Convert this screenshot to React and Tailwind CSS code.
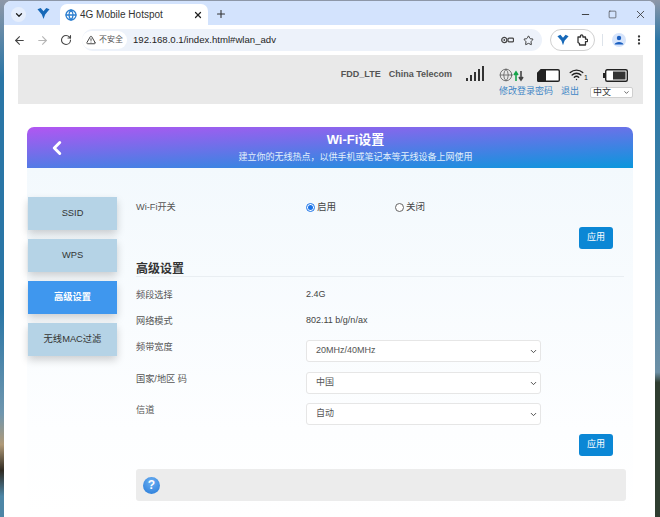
import { ArrowLeft, ArrowRight, RotateCw, TriangleAlert, Star, EllipsisVertical, Minus, Square, X, Plus, ChevronDown, ChevronLeft, Globe, Wifi } from "lucide-react";

const font = "font-['Liberation_Sans','Noto_Sans_CJK_SC',sans-serif]";

function VLogo({ size = 13 }) {
  return (
    <svg width={size} height={size} viewBox="0 0 14 14">
      <path d="M0.5 2.5 L4 1 L7 4.5 L10 1 L13.5 2.5 L8.8 8 L7 13 L5.2 8 Z" fill="#1668b8" />
    </svg>
  );
}

function Field({ label, children, rowClass, labelClass = "pt-px" }) {
  return (
    <div className={`flex ${rowClass}`}>
      <div className={`w-[170px] shrink-0 text-[9.2px] text-[#555] ${labelClass}`}>{label}</div>
      {children}
    </div>
  );
}

function Dropdown({ value }) {
  return (
    <div className="flex h-[22px] w-[235px] items-center justify-between rounded-[3px] border border-[#e6e6e6] bg-white pl-[9px] pr-[2px] text-[9px] text-[#555]">
      <span>{value}</span>
      <ChevronDown size={9} strokeWidth={2.5} className="text-[#444]" />
    </div>
  );
}

function ApplyButton() {
  return (
    <div className="flex h-[22px] w-[34px] items-center justify-center rounded-[3px] bg-[#0b87d5] text-[9px] text-white">
      应用
    </div>
  );
}

function SideButton({ children, active, className = "" }) {
  return (
    <div
      className={`flex h-[33px] w-[89px] items-center justify-center text-[9.3px] shadow-[0_4px_8px_rgba(0,0,0,0.18)] ${
        active ? "bg-[#3f97ee] font-bold text-white" : "bg-[#b5d3e6] text-[#333]"
      } ${className}`}
    >
      {children}
    </div>
  );
}

export default function App() {
  return (
    <div className={`flex h-[517px] w-[660px] overflow-hidden bg-[#8d97a8] ${font}`}>
      {/* Desktop wallpaper, left edge */}
      <div className="w-[4px] shrink-0 bg-[linear-gradient(180deg,#8d97a8_0%,#2a76a6_15%,#2a76a6_60%,#6f96ae_80%,#b09a78_86%,#2f2a22_91%,#4d86a6_96%,#4d86a6_100%)]" />

      <div className="mt-px flex h-[516px] w-[651px] shrink-0 flex-col overflow-hidden rounded-t-[7px] bg-white">

        {/* Tab strip */}
        <div className="flex h-[24px] shrink-0 items-end bg-[#d3e3fd]">
          <div className="mb-[3px] ml-[7px] flex h-[15px] w-[15px] items-center justify-center rounded-full bg-[#e6eefc]">
            <ChevronDown size={10} strokeWidth={3} className="text-[#1f1f1f]" />
          </div>
          <div className="mb-[5px] ml-[11px]"><VLogo /></div>
          <div className="ml-[10px] flex h-[21px] w-[148px] items-center rounded-t-[7px] bg-white pl-[5px] pr-[5px]">
            <Globe size={12} className="text-[#2c7fd0]" strokeWidth={2.6} />
            <span className="ml-[3px] text-[10px] text-[#333]">4G Mobile Hotspot</span>
            <X size={10} strokeWidth={3} className="ml-auto text-[#222]" />
          </div>
          <Plus size={12} strokeWidth={2.2} className="mb-[5px] ml-[7px] text-[#333]" />
          <div className="mb-[4px] ml-auto flex items-center gap-[17px] pr-[8px] text-[#333]">
            <Minus size={11} strokeWidth={2} />
            <Square size={9} strokeWidth={1.6} />
            <X size={13} strokeWidth={1.5} />
          </div>
        </div>

        {/* Toolbar */}
        <div className="flex h-[30px] shrink-0 items-center bg-white pl-[9px] pr-[6px]">
          <ArrowLeft size={13} strokeWidth={2} className="text-[#444]" />
          <ArrowRight size={13} strokeWidth={2} className="ml-[10px] text-[#b5b5b5]" />
          <RotateCw size={12} strokeWidth={2.2} className="ml-[11px] text-[#444]" />
          <div className="ml-[10px] flex h-[22px] w-[460px] items-center rounded-full bg-[#edf2fa] pr-[8px]">
            <div className="flex h-[18px] w-[45px] items-center whitespace-nowrap rounded-full bg-white pl-[4px] text-[8px] text-[#555]">
              <TriangleAlert size={10} strokeWidth={2.2} className="mr-[3px] shrink-0 text-[#333]" />
              <span>不安全</span>
            </div>
            <span className="ml-[6px] text-[9.6px] text-[#1f1f1f]">192.168.0.1/index.html#wlan_adv</span>
            <svg width="13" height="8" viewBox="0 0 13 8" className="ml-auto text-[#444]">
              <circle cx="3.3" cy="4" r="2.6" fill="none" stroke="currentColor" strokeWidth="1.2" />
              <circle cx="3.3" cy="4" r="0.9" fill="currentColor" />
              <rect x="7" y="2.2" width="5.5" height="3.6" rx="1" fill="none" stroke="currentColor" strokeWidth="1.2" />
            </svg>
            <Star size={11} strokeWidth={2} className="ml-[9px] text-[#333]" />
          </div>
          <div className="ml-[8px] flex h-[22px] w-[45px] items-center justify-between rounded-full border border-[#d0d0d0] px-[6px]">
            <VLogo size={12} />
            <svg width="12" height="12" viewBox="0 0 12 12" fill="none" stroke="#333" strokeWidth="1.3" strokeLinejoin="round">
              <path d="M2 3H4.5V2a1.2 1.2 0 0 1 2.4 0V3H9.5V5.2H10.5a1.2 1.2 0 0 1 0 2.4H9.5V11H3.5V9.5L2 8.5Z" />
            </svg>
          </div>
          <div className="ml-[7px] h-[12px] w-px bg-[#dde3ea]" />
          <div className="ml-[9px] flex h-[14px] w-[14px] items-center justify-center rounded-full bg-[#d6e4fb]">
            <svg width="10" height="10" viewBox="0 0 10 10">
              <circle cx="5" cy="3" r="2.2" fill="#1a5fc0" />
              <path d="M0.5 9.5 C1 6 9 6 9.5 9.5Z" fill="#1a5fc0" />
            </svg>
          </div>
          <EllipsisVertical size={12} strokeWidth={2.6} className="ml-[7px] text-[#333]" />
        </div>

        {/* Page */}
        <div className="ml-[14px] w-[625px] flex-1 overflow-hidden">

          {/* Device status header */}
          <div className="flex h-[49px] justify-end bg-[#e9e9e9] pr-[10px]">
            <div className="mr-[14px] flex items-start gap-[8px] whitespace-nowrap pt-[13px] text-[9px] font-bold text-[#555]">
              <span>FDD_LTE</span>
              <span>China Telecom</span>
            </div>
            <div className="mr-[15px] pt-[11px]">
              <svg width="18" height="16" viewBox="0 0 18 16" fill="#333">
                <rect x="0" y="12" width="2" height="3" />
                <rect x="4" y="9" width="2" height="6" />
                <rect x="8" y="6" width="2" height="9" />
                <rect x="12" y="3" width="2" height="12" />
                <rect x="16" y="0" width="2" height="15" />
              </svg>
            </div>
            <div className="flex w-[134px] flex-col">
              <div className="flex h-[27px] items-end">
                <Globe size={14} strokeWidth={1.3} className="text-[#555]" />
                <svg width="11" height="12" viewBox="0 0 11 12">
                  <path d="M3 11V3M1 5l2-3 2 3" fill="none" stroke="#16a34a" strokeWidth="1.6" />
                  <path d="M8 1v8M6 7l2 3 2-3" fill="none" stroke="#444" strokeWidth="1.6" />
                </svg>
                <svg width="23" height="13" viewBox="0 0 23 13" className="ml-[13px]">
                  <path d="M4 .7H21a1.3 1.3 0 0 1 1.3 1.3V11a1.3 1.3 0 0 1-1.3 1.3H1.5a.8.8 0 0 1-.8-.8V4Z" fill="#fff" stroke="#222" strokeWidth="1.4" />
                  <path d="M4 .7H9V12.3H1.5a.8.8 0 0 1-.8-.8V4Z" fill="#222" />
                </svg>
                <div className="ml-[9px] flex items-end">
                  <Wifi size={15} strokeWidth={2.2} className="text-[#222]" />
                  <span className="text-[7px] leading-[8px] text-[#222]">1</span>
                </div>
                <svg width="25" height="13" viewBox="0 0 25 13" className="ml-[15px]">
                  <rect x="0" y="4" width="2" height="5" fill="#222" />
                  <rect x="2.7" y=".7" width="21.6" height="11.6" rx="1.5" fill="#fff" stroke="#222" strokeWidth="1.4" />
                  <rect x="10" y="2.5" width="12.5" height="8" fill="#333" />
                </svg>
              </div>
              <div className="mt-[4px] flex h-[12px] items-center whitespace-nowrap text-[9px] text-[#3f86c6]">
                <span>修改登录密码</span>
                <span className="ml-[8px]">退出</span>
                <div className="ml-[11px] flex h-[11px] w-[43px] shrink-0 items-center justify-between rounded-[2px] border border-[#cfcfcf] bg-white pl-[2px] pr-[2px] text-[9px] leading-none text-[#333]">
                  <span>中文</span>
                  <ChevronDown size={7} strokeWidth={2.5} />
                </div>
              </div>
            </div>
          </div>

          {/* Title banner */}
          <div className="ml-[9px] mt-[23px] flex h-[41px] w-[606px] items-center rounded-t-[7px] bg-[linear-gradient(177deg,#b256f2_0%,#0a97dc_100%)] text-white">
            <ChevronLeft size={22} strokeWidth={3.2} className="ml-[19px] shrink-0" />
            <div className="flex flex-1 flex-col items-center pl-[10px]">
              <span className="text-[13px] font-bold leading-[16px]">Wi-Fi设置</span>
              <span className="mt-[3px] text-[9px] leading-[13px] text-[#e2effb]">建立你的无线热点，以供手机或笔记本等无线设备上网使用</span>
            </div>
          </div>

          {/* Body */}
          <div className="ml-[9px] flex h-[349px] w-[606px] bg-[linear-gradient(180deg,#f3f9fd_0%,#fdfeff_75%,#ffffff_100%)]">
            <div className="ml-px flex w-[108px] shrink-0 flex-col gap-[9px] pt-[29px]">
              <SideButton>SSID</SideButton>
              <SideButton>WPS</SideButton>
              <SideButton active>高级设置</SideButton>
              <SideButton className="h-[32px]">无线MAC过滤</SideButton>
            </div>

            <div className="flex w-[490px] flex-col pt-[32px]">
              <Field label="Wi-Fi开关" rowClass="h-[13px]">
                <div className="flex items-center pt-[2px] text-[9.5px] text-[#444]">
                  <span className="mr-[2px] flex h-[9px] w-[9px] items-center justify-center rounded-full border border-[#1a73e8] bg-white">
                    <span className="h-[5px] w-[5px] rounded-full bg-[#1a73e8]" />
                  </span>
                  <span className="w-[78px]">启用</span>
                  <span className="mr-[2px] h-[9px] w-[9px] rounded-full border border-[#666] bg-white" />
                  <span>关闭</span>
                </div>
              </Field>
              <div className="mr-[13px] mt-[14px] flex justify-end"><ApplyButton /></div>
              <div className="mr-[2px] mt-[13px] border-b border-[#e9eef2] text-[12px] font-bold leading-[14px] text-[#333]">高级设置</div>
              <Field label="频段选择" rowClass="mt-[11px] h-[14px] items-center" labelClass="pt-[2px]">
                <span className="text-[9px] text-[#444]">2.4G</span>
              </Field>
              <Field label="网络模式" rowClass="mt-[12px] h-[14px] items-center" labelClass="pt-[2px]">
                <span className="text-[9px] text-[#444]">802.11 b/g/n/ax</span>
              </Field>
              <Field label="频带宽度" rowClass="mt-[12px] h-[22px]">
                <Dropdown value="20MHz/40MHz" />
              </Field>
              <Field label="国家/地区 码" rowClass="mt-[10px] h-[22px]">
                <Dropdown value="中国" />
              </Field>
              <Field label="信道" rowClass="mt-[9px] h-[22px]">
                <Dropdown value="自动" />
              </Field>
              <div className="mr-[13px] mt-[9px] flex justify-end"><ApplyButton /></div>
              <div className="mt-[13px] flex h-[32px] items-center rounded-[3px] bg-[#ececec] pl-[7px]">
                <div className="flex h-[17px] w-[17px] items-center justify-center rounded-full bg-[radial-gradient(circle_at_50%_30%,#6db0f2,#2479d8)] text-[12px] font-bold text-white">?</div>
              </div>
            </div>
          </div>
        </div>
      </div>

      {/* Desktop wallpaper, right edge */}
      <div className="w-[5px] shrink-0 bg-[linear-gradient(180deg,#8d97a8_0%,#2a76a6_8%,#3a80a8_40%,#6c8fa5_72%,#2f3d30_74%,#2f3d30_100%)]" />
    </div>
  );
}
